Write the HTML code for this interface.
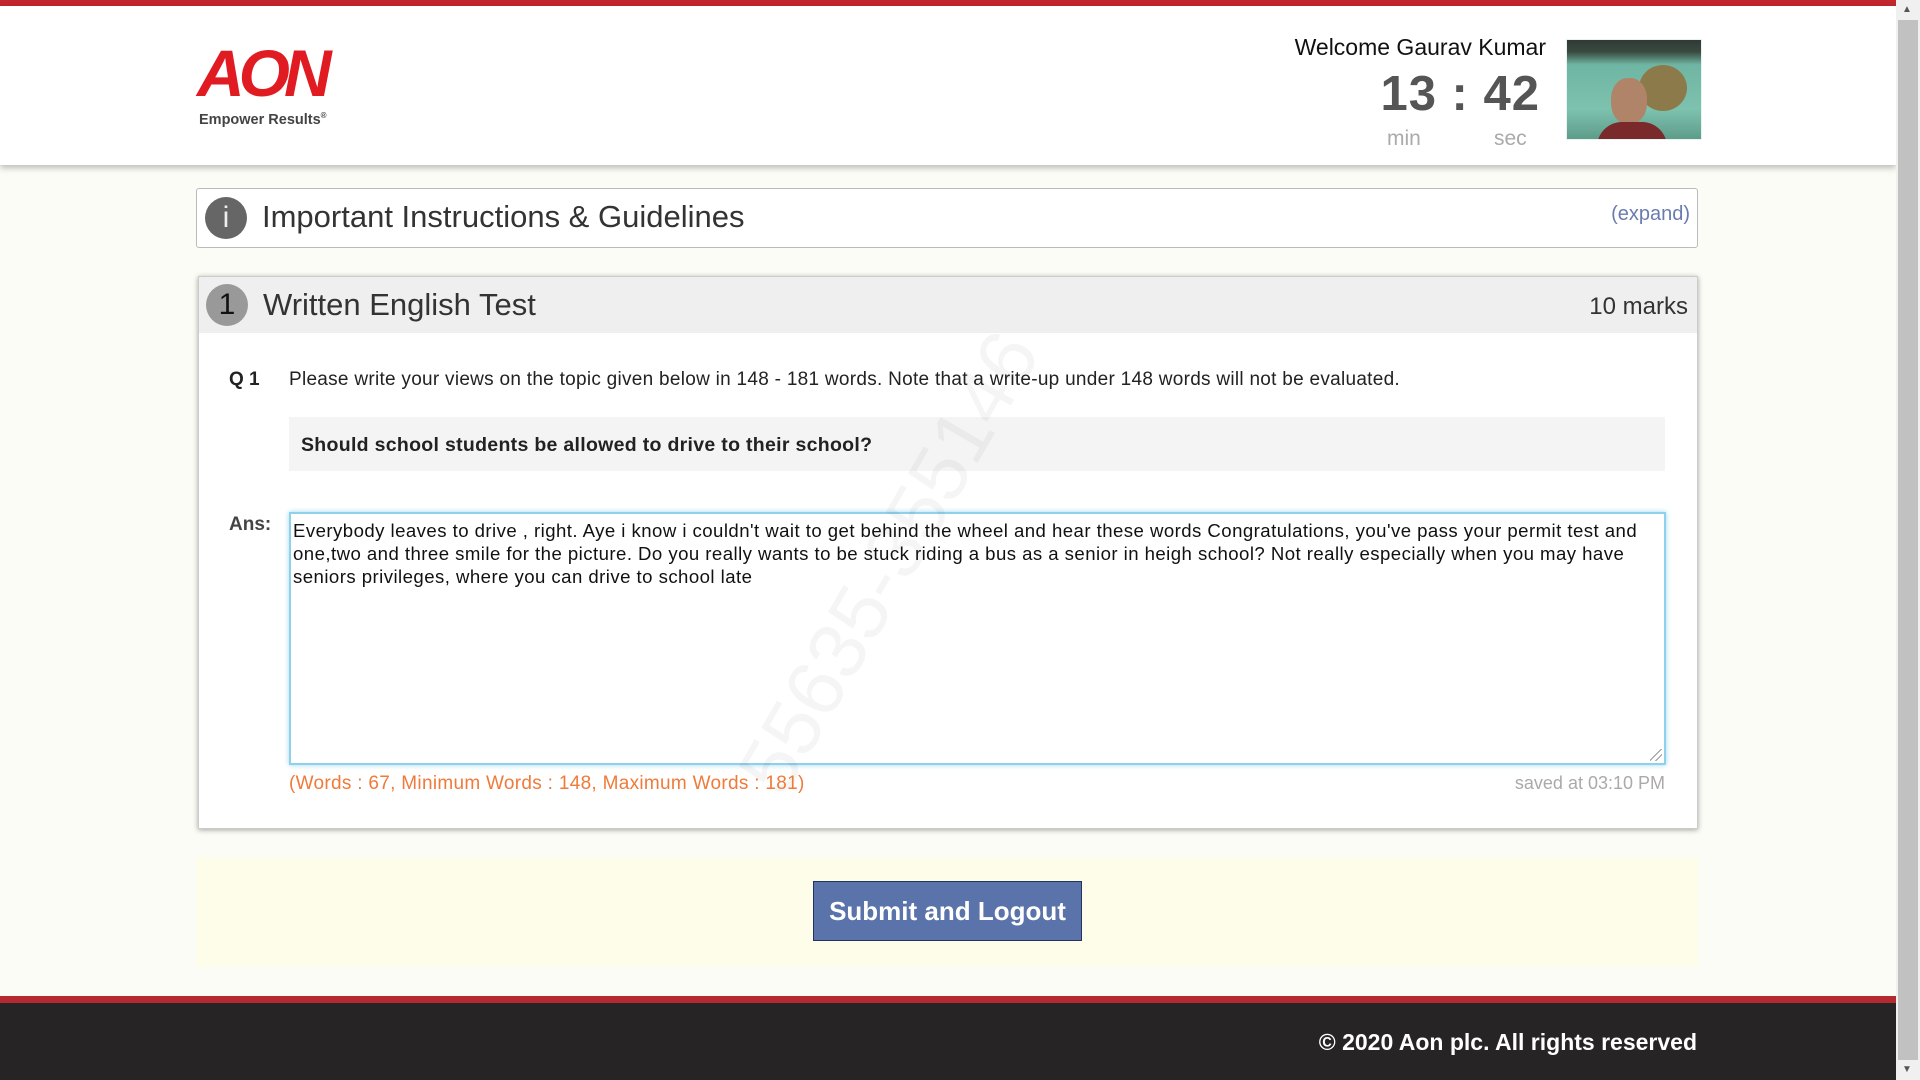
<!DOCTYPE html>
<html><head><meta charset="utf-8"><style>
*{margin:0;padding:0;box-sizing:border-box}
body{width:1920px;height:1080px;overflow:hidden;background:#fcfcf6;font-family:"Liberation Sans",Tahoma,sans-serif;position:relative;color:#222}
.a{position:absolute}
</style></head><body>
<div class="a" style="left:0;top:0;width:1896px;height:6px;background:#c1272d"></div>
<div class="a" style="left:0;top:6px;width:1896px;height:159px;background:#fff;box-shadow:0 3px 6px rgba(0,0,0,.25)"></div>
<!-- logo -->
<div class="a" style="left:197px;top:38px;font-family:'Liberation Sans',sans-serif;font-weight:bold;font-style:italic;font-size:66px;color:#e11b22;letter-spacing:-6px;line-height:70px;transform:scaleX(1.0);transform-origin:left">AON</div>
<div class="a" style="left:199px;top:111px;font-size:14.5px;font-weight:bold;color:#444">Empower Results<sup style="font-size:8px">®</sup></div>
<!-- header right -->
<div class="a" style="right:374px;top:34px;font-size:23px;color:#111">Welcome Gaurav Kumar</div>
<div class="a" style="right:380px;top:66px;font-size:49px;font-weight:bold;color:#555;letter-spacing:1px">13 : 42</div>
<div class="a" style="left:1387px;top:127px;font-size:21px;color:#aaa">min</div>
<div class="a" style="left:1494px;top:127px;font-size:21px;color:#aaa">sec</div>
<div class="a" style="left:1566px;top:39px;width:136px;height:101px;background:linear-gradient(180deg,#2e3a33 0,#3a4a40 12%,#6fb5a3 25%,#7cc2ae 70%,#5f9c8a 100%);overflow:hidden;border:1px solid #e8f2f5">
 <div class="a" style="left:72px;top:25px;width:48px;height:46px;border-radius:50%;background:#8c7a4a"></div>
 <div class="a" style="left:44px;top:38px;width:36px;height:46px;border-radius:45%;background:#b08468"></div>
 <div class="a" style="left:30px;top:82px;width:70px;height:25px;border-radius:30px 30px 0 0;background:#7a2a2a"></div>
</div>
<!-- scrollbar -->
<div class="a" style="left:1896px;top:0;width:24px;height:1080px;background:#f0f0f0"></div>
<div class="a" style="left:1898px;top:20px;width:20px;height:1040px;background:#c1c1c1"></div>
<div class="a" style="left:1902px;top:4px;font-size:10px;color:#555">▲</div>
<div class="a" style="left:1902px;top:1064px;font-size:10px;color:#555">▼</div>
<!-- instructions -->
<div class="a" style="left:196px;top:188px;width:1502px;height:60px;background:#fff;border:1px solid #bbb;border-radius:3px"></div>
<div class="a" style="left:205px;top:197px;width:42px;height:42px;border-radius:50%;background:#666;color:#eee;font-size:30px;text-align:center;line-height:42px">i</div>
<div class="a" style="left:262px;top:199px;font-size:31px;color:#333">Important Instructions &amp; Guidelines</div>
<div class="a" style="right:230px;top:203px;font-size:20px;color:#6a7bb0">(expand)</div>
<!-- question panel -->
<div class="a" style="left:198px;top:276px;width:1500px;height:553px;background:#fff;border:1px solid #ccc;box-shadow:0 1px 5px rgba(0,0,0,.35)"></div>
<div class="a" style="left:199px;top:277px;width:1498px;height:56px;background:#efefef"></div>
<div class="a" style="left:206px;top:284px;width:42px;height:42px;border-radius:50%;background:#999;color:#111;font-size:30px;text-align:center;line-height:42px">1</div>
<div class="a" style="left:263px;top:287px;font-size:31px;color:#333">Written English Test</div>
<div class="a" style="right:232px;top:293px;font-size:24px;color:#333">10 marks</div>
<div class="a" style="left:229px;top:369px;font-size:19px;font-weight:bold">Q 1</div>
<div class="a" style="left:289px;top:369px;font-size:19px;letter-spacing:.28px;white-space:nowrap">Please write your views on the topic given below in 148 - 181 words. Note that a write-up under 148 words will not be evaluated.</div>
<div class="a" style="left:289px;top:417px;width:1376px;height:54px;background:#f4f4f4"></div>
<div class="a" style="left:301px;top:434px;font-size:19.5px;font-weight:bold;letter-spacing:.3px;white-space:nowrap">Should school students be allowed to drive to their school?</div>
<div class="a" style="left:229px;top:514px;font-size:19px;font-weight:bold;color:#444">Ans:</div>
<div class="a" style="left:289px;top:512px;width:1377px;height:253px;background:#fff;border:2px solid #8fd0ea;box-shadow:0 0 5px #9fd6ee"></div>
<div class="a" style="left:760px;top:740px;font-size:80px;color:rgba(0,0,0,.04);transform:rotate(-60deg);transform-origin:left;white-space:nowrap">55635-355146</div>
<div class="a" style="left:293px;top:519px;font-size:18.6px;line-height:23px;white-space:nowrap;color:#111;letter-spacing:.45px">Everybody leaves to drive , right. Aye i know i couldn't wait to get behind the wheel and hear these words Congratulations, you've pass your permit test and<br>one,two and three smile for the picture. Do you really wants to be stuck riding a bus as a senior in heigh school? Not really especially when you may have<br>seniors privileges, where you can drive to school late</div>
<div class="a" style="left:1650px;top:749px;width:12px;height:12px;background:linear-gradient(135deg,transparent 45%,#999 45%,#999 52%,transparent 52%,transparent 70%,#999 70%,#999 77%,transparent 77%)"></div>
<div class="a" style="left:289px;top:773px;font-size:19px;color:#f07a3a;letter-spacing:.3px">(Words : 67, Minimum Words : 148, Maximum Words : 181)</div>
<div class="a" style="right:255px;top:773px;font-size:18px;color:#aaa">saved at 03:10 PM</div>
<!-- submit area -->
<div class="a" style="left:196px;top:857px;width:1502px;height:110px;background:#fefde9"></div>
<div class="a" style="left:813px;top:881px;width:269px;height:60px;background:#5a73ab;border:1px solid #23325e;color:#fff;font-weight:bold;font-size:26px;text-align:center;line-height:58px">Submit and Logout</div>
<!-- footer -->
<div class="a" style="left:0;top:996px;width:1896px;height:7px;background:#b52a30"></div>
<div class="a" style="left:0;top:1003px;width:1896px;height:77px;background:#262424"></div>
<div class="a" style="right:223px;top:1029px;font-size:23px;font-weight:bold;color:#fff">© 2020 Aon plc. All rights reserved</div>
</body></html>
